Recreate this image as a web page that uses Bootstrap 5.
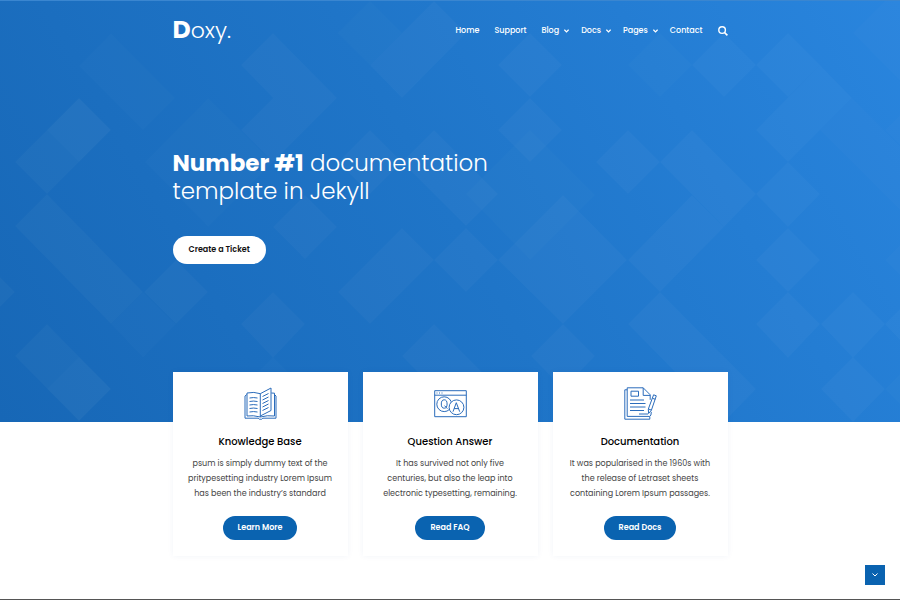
<!DOCTYPE html>
<html lang="en">
<head>
<meta charset="utf-8">
<meta name="viewport" content="width=device-width, initial-scale=1">
<title>Doxy</title>
<link href="https://cdn.jsdelivr.net/npm/bootstrap@5.3.0/dist/css/bootstrap.min.css" rel="stylesheet">
<style>
  body { font-family: Poppins, Inter, "Open Sans", sans-serif; color: #333; }
  .page-wrap { max-width: 555px; }
  .hero { background: linear-gradient(60deg, #1767b6 0%, #1f75c8 50%, #2985de 100%); border-top: 1px solid #3a86d0; padding-bottom: 157px; }
  .hero-pattern { inset: 0; }
  .brand-name { font-size: 22px; line-height: 30px; font-weight: 300; margin-top: 14px; }
  .brand-name b { font-size: 25px; font-weight: 700; }
  .main-nav { gap: 15px; font-size: 8px; line-height: 20px; font-weight: 500; padding-top: 20px; }
  .main-nav .nav-link { font-size: 8px; font-weight: 500; }
  .main-nav svg { display: block; }
  .menu-arrow { margin: 0 -3px 0 5px; }
  .hero-title { font-size: 23px; line-height: 28px; font-weight: 300; margin-top: 103px; }
  .hero-title b { font-weight: 700; }
  .pill { border: 0; border-radius: 14px; font-size: 8px; font-weight: 600; line-height: 12px; padding: 6px 15px; }
  .pill-light { background: #fff; color: #111; margin-top: 31px; padding: 8px 16px; }
  .pill-blue, .pill-blue:hover { background: #0a63b0; color: #fff; }
  .hero .pill { margin-bottom: 1px; }
  .features { margin-top: -50px; }
  .feature-row { --bs-gutter-x: 15px; }
  .feature { border: 0; border-radius: 0; box-shadow: 0 0 6px rgba(20, 70, 150, .06); padding: 15px 10px 16px; }
  .feature h2 { font-size: 10px; line-height: 14px; font-weight: 500; color: #000; margin: 15px 0 7px; }
  .feature p { font-size: 8px; line-height: 15px; color: #444; margin-bottom: 15px; }
  .site-footer { margin-top: 43px; border-top: 1px solid #555; }
  .to-bottom { right: 15px; bottom: 15px; width: 20px; height: 20px; background: #0a63b0; border: 0; }
</style>
<script src="https://cdn.jsdelivr.net/npm/bootstrap@5.3.0/dist/js/bootstrap.bundle.min.js"></script>
</head>
<body class="bg-white">
<header class="hero position-relative text-white overflow-hidden">
  <svg class="hero-pattern position-absolute w-100 h-100" viewBox="0 0 900 421" preserveAspectRatio="xMidYMid slice" aria-hidden="true">
    <g fill="#fff" fill-opacity=".028">
      <path d="M15 161 79 97l32 32-64 64zM15 225l32-32 96 98-32 32zM144 291l32-32 32 32-32 32zM241 64l32-32 64 65-64 64-32-32 32-32z"/>
      <path d="M370 64 434 0l32 32-64 65zM338 161l32-32 32 32-32 32zM402 161l32-32 64 64-32 32zM273 226l32-32 32 32-32 32z"/>
      <path d="M338 291l64-64 32 32-64 64zM241 323l32-32 32 32-32 34zM434 259l32-32 32 32-32 32zM402 355l32-32 64 64-32 33z"/>
      <path d="M15 355l32-32 64 65-32 32zM-17 291l16-16 16 16-16 16zM498 64l32-32 32 32-32 32zM498 129l32-32 32 32-32 32z"/>
      <path d="M692 64l32-32 32 32-32 32zM756 64l32-32 32 32-32 32zM756 129l64-65 32 33-64 64zM596 161l32-32 32 32-32 32zM660 161l32-32 64 64-32 33z"/>
      <path d="M628 259l64-65 32 32-64 65zM756 193l32-32 32 32-32 33zM756 259l32-32 32 32-32 32zM756 323l32-32 32 32-32 34zM821 323l32-32 32 32-32 34zM885 323l32-32 32 32-32 34z"/>
      <path d="M498 259l65-65 64 65-64 64zM531 355l32-32 32 32-32 33zM821 388l32-32 32 32-32 33zM628 323l32-32 96 97-32 33z"/>
    </g>
    <g fill="#fff" fill-opacity=".015">
      <path d="M628 64l32-32 32 32-32 32zM145 161l63-64 65 64-65 65zM111 323l32-32 33 32-33 34zM79 65l32-33 64 65-32 32zM885 129l32-32 32 32-32 32zM885 259l32-32 32 32-32 32z"/>
      <path d="M820 129l32-32 97 97-32 32zM853 32l64-64 64 64-64 65zM47 388l32-32 32 32-32 32zM47 129l32-32 32 32-32 32zM885 388l32-32 32 32-32 32zM241 388l32-32 32 32-32 32z"/>
      <path d="M466 193l64-64 65 65-65 65zM337 32l33-32 32 32-32 32z"/>
    </g>
  </svg>
  <div class="page-wrap container p-0 position-relative">
    <div class="d-flex justify-content-between align-items-start">
      <a class="brand-name text-white text-decoration-none" href="#"><b>D</b>oxy.</a>
      <nav class="main-nav d-flex" aria-label="Main">
        <a class="nav-link" href="#">Home</a>
        <a class="nav-link" href="#">Support</a>
        <a class="nav-link d-flex align-items-center" href="#">Blog<svg class="menu-arrow" width="5" height="4" viewBox="0 0 5 4" fill="none" stroke="#fff" stroke-width="1.2"><path d="M.4.7 2.5 2.9 4.6.7"/></svg></a>
        <a class="nav-link d-flex align-items-center" href="#">Docs<svg class="menu-arrow" width="5" height="4" viewBox="0 0 5 4" fill="none" stroke="#fff" stroke-width="1.2"><path d="M.4.7 2.5 2.9 4.6.7"/></svg></a>
        <a class="nav-link d-flex align-items-center" href="#">Pages<svg class="menu-arrow" width="5" height="4" viewBox="0 0 5 4" fill="none" stroke="#fff" stroke-width="1.2"><path d="M.4.7 2.5 2.9 4.6.7"/></svg></a>
        <a class="nav-link" href="#">Contact</a>
        <button class="btn p-0 border-0 d-flex align-items-center" type="button" aria-label="Search"><svg width="10" height="10" viewBox="0 0 10 10" fill="none" stroke="#fff" stroke-width="1.4"><circle cx="4.1" cy="4.1" r="3.3"/><path d="M6.5 6.5 9.4 9.4" stroke-width="1.7"/></svg></button>
      </nav>
    </div>
    <h1 class="hero-title mb-0"><b>Number #1</b> documentation<br>template in Jekyll</h1>
    <button class="btn pill pill-light" type="button">Create a Ticket</button>
  </div>
</header>

<main class="features page-wrap container p-0 position-relative">
  <div class="row row-cols-3 feature-row">
    <div class="col">
      <article class="card feature h-100 text-center align-items-center">
        <svg width="33" height="33" viewBox="0 0 33 33" fill="none" stroke="#2b6cbb" aria-hidden="true"><path d="M2.8 7.5 1 9v22.2h13.2l1 1h2.6l1-1H32V9l-1.5-1.5M3 29V6q7-1.5 13.3.7V30Q9 28 3 29M16.3 30q7-2 14.2-1V6.2L27.3 6M16.3 6.7 27 1v22.5L16.3 29"/><path d="M5.5 11q4-.9 8 0M5.5 14.5q4-.9 8 0M5.5 18q4-.9 8 0M5.5 21.5q4-.9 8 0M5.5 25q4-.9 8 0M18.5 9.5l6-3M18.5 13l6-3M18.5 16.5l6-3M18.5 20l6-3M18.5 23.5l6-3"/></svg>
        <h2>Knowledge Base</h2>
        <p>psum is simply dummy text of the<br>pritypesetting industry Lorem Ipsum<br>has been the industry’s standard</p>
        <a class="btn pill pill-blue" href="#">Learn More</a>
      </article>
    </div>
    <div class="col">
      <article class="card feature h-100 text-center align-items-center">
        <svg width="33" height="33" viewBox="0 0 33 33" fill="none" stroke="#2b6cbb" aria-hidden="true"><path d="M.7 3.7h31.6v26H.7zM.7 8.2h31.6"/><path d="M2.5 6h1M5 6h1M7.5 6h1"/><circle cx="10.2" cy="17.2" r="7.4"/><circle cx="22.5" cy="20.3" r="7.4" fill="#fff"/><ellipse cx="10.2" cy="17" rx="2.9" ry="4.2"/><path d="m10.5 18.6 2.9 3.1M19 24.7l3.3-9 3.4 9M20.1 21.6h4.5"/></svg>
        <h2>Question Answer</h2>
        <p>It has survived not only five<br>centuries, but also the leap into<br>electronic typesetting, remaining.</p>
        <a class="btn pill pill-blue" href="#">Read FAQ</a>
      </article>
    </div>
    <div class="col">
      <article class="card feature h-100 text-center align-items-center">
        <svg width="33" height="33" viewBox="0 0 33 33" fill="none" stroke="#2b6cbb" aria-hidden="true"><path d="M3.2 2.8H.8v29.4h25v-2.5M3.2.8h16l7 7v5M3.2.8v28.6h22.6q1.5-.5 1.5-4.5M19.2.8v7.6h7"/><path d="M7 4.2h7.5v5H7zM6 13h14M6 16.5h15.5M6 20h15.5M6 23.5h14M15 27h9"/><path d="m29.6 7.8 2.7 1-4.9 14.4-2.8 3.3-.3-4.4zM24.5 22l2.9 1.1M28.5 11.3l2.8 1"/></svg>
        <h2>Documentation</h2>
        <p>It was popularised in the 1960s with<br>the release of Letraset sheets<br>containing Lorem Ipsum passages.</p>
        <a class="btn pill pill-blue" href="#">Read Docs</a>
      </article>
    </div>
  </div>
</main>
<footer class="site-footer"></footer>
<button class="to-bottom position-fixed d-flex align-items-center justify-content-center p-0" type="button" aria-label="Scroll down"><svg width="6" height="4" viewBox="0 0 6 4" fill="none" stroke="#fff"><path d="M.5.5 3 3 5.5.5"/></svg></button>
</body>
</html>
